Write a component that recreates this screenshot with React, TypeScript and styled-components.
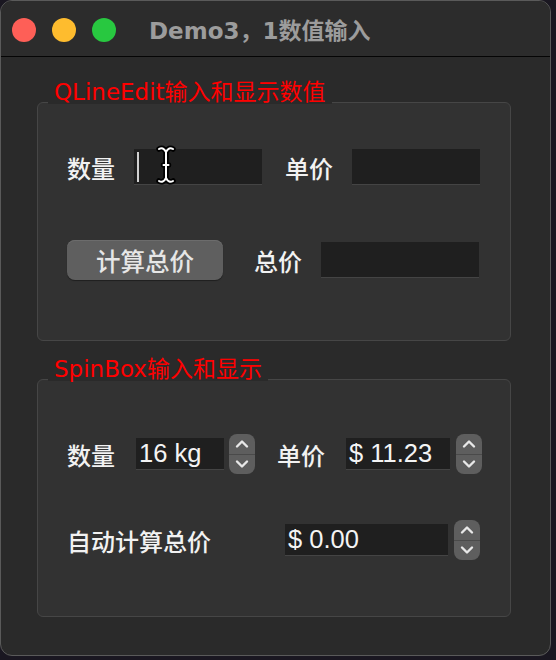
import React from "react"
import styled, { createGlobalStyle } from "styled-components"

const GlobalStyle = createGlobalStyle`
  html, body {
    margin: 0;
    padding: 0;
    background: #1a1721;
  }
  #root {
    width: 556px;
    height: 660px;
  }
`

const Window = styled.div`
  position: relative;
  width: 551px;
  height: 656px;
  box-sizing: border-box;
  border: 1px solid #5a5a5a;
  border-radius: 12px;
  background: #2a2a2a;
  overflow: hidden;
  display: flex;
  flex-direction: column;
`

const TitleBar = styled.div`
  height: 55px;
  flex: none;
  background: #2c2c2c;
  border-bottom: 1px solid #050505;
  display: flex;
  align-items: center;
  padding-left: 11px;
`

const Light = styled.span<{ $color: string }>`
  width: 24px;
  height: 24px;
  border-radius: 50%;
  background: ${(p) => p.$color};
  margin-right: 16px;
  margin-top: 2px;
`

const WindowTitle = styled.div`
  margin-left: 17px;
  margin-top: 1px;
  color: #9c9c9c;
  font-family: "DejaVu Sans", "Noto Sans CJK SC", sans-serif;
  font-weight: 700;
  font-size: 23px;
  white-space: nowrap;
`

const Content = styled.div`
  padding: 45px 0 0 36px;
  display: flex;
  flex-direction: column;
  gap: 38px;
`

const Group = styled.div<{ $height: number; $padTop: number; $gap: number }>`
  position: relative;
  width: 474px;
  height: ${(p) => p.$height}px;
  box-sizing: border-box;
  border: 1px solid #464646;
  border-radius: 6px;
  background: #323232;
  padding: ${(p) => p.$padTop}px 0 0 29px;
  display: flex;
  flex-direction: column;
  gap: ${(p) => p.$gap}px;
`

const GroupTitle = styled.div`
  position: absolute;
  left: 10px;
  top: -23px;
  height: 24px;
  padding: 0 6px;
  background: #2a2a2a;
  color: #ff0000;
  font-family: "DejaVu Sans", "Noto Sans CJK SC", sans-serif;
  font-size: 23px;
  line-height: 24px;
  white-space: nowrap;
  -webkit-font-smoothing: none;
`

const Row = styled.div<{ $height: number }>`
  height: ${(p) => p.$height}px;
  display: flex;
  align-items: center;
`

const Label = styled.span<{ $gap: number }>`
  color: #f2f2f2;
  font-family: "Noto Sans CJK SC", sans-serif;
  font-size: 24px;
  font-weight: 500;
  margin-right: ${(p) => p.$gap}px;
  white-space: nowrap;
`

const LineEdit = styled.div<{ $width: number; $height: number; $gap?: number }>`
  position: relative;
  width: ${(p) => p.$width}px;
  height: ${(p) => p.$height}px;
  box-sizing: border-box;
  background: #1f1f1f;
  border-bottom: 1px solid #444;
  margin-right: ${(p) => p.$gap ?? 0}px;
  display: flex;
  align-items: center;
  padding-left: 3px;
  color: #f4f4f4;
  font-family: "Liberation Sans", Arial, sans-serif;
  font-size: 25.5px;
`

const Caret = styled.span`
  width: 2px;
  height: 30px;
  background: #d0d0d0;
`

const PushButton = styled.button`
  width: 156px;
  height: 40px;
  border: none;
  border-radius: 8px;
  background: #5f5f5f;
  box-shadow: inset 0 1px 0 #6c6c6c, 0 1px 1px rgba(0, 0, 0, 0.4);
  color: #e6e6e6;
  font-family: "Noto Sans CJK SC", sans-serif;
  font-size: 24.5px;
  font-weight: 500;
  margin-right: 31px;
  padding: 0;
`

const SpinButtons = styled.div<{ $gap: number; $after?: number }>`
  width: 26px;
  height: 40px;
  border-radius: 8px;
  background: #5e5e5e;
  margin-left: ${(p) => p.$gap}px;
  margin-right: ${(p) => p.$after ?? 0}px;
  display: flex;
  flex-direction: column;
  overflow: hidden;
`

const SpinHalf = styled.div<{ $top?: boolean }>`
  flex: 1;
  display: flex;
  align-items: center;
  justify-content: center;
  border-bottom: ${(p) => (p.$top ? "1px solid #4a4a4a" : "none")};
`

const Cursor = styled.svg`
  position: absolute;
  left: 22px;
  top: -4px;
`

const Chevron = ({ up }: { up?: boolean }) => (
  <svg width="14" height="10" viewBox="0 0 14 10">
    <polyline
      points={up ? "2,7.5 7,2.5 12,7.5" : "2,2.5 7,7.5 12,2.5"}
      fill="none"
      stroke="#e8e8e8"
      strokeWidth="2.4"
      strokeLinecap="round"
      strokeLinejoin="round"
    />
  </svg>
)

const Spin = ({ gap, after }: { gap: number; after?: number }) => (
  <SpinButtons $gap={gap} $after={after}>
    <SpinHalf $top>
      <Chevron up />
    </SpinHalf>
    <SpinHalf>
      <Chevron />
    </SpinHalf>
  </SpinButtons>
)

const IBeam = () => {
  const d =
    "M3 4 C5.5 2.5 8 3 10 7 C12 3 14.5 2.5 17 4 M10 7 L10 33 M3 36 C5.5 37.5 8 37 10 33 C12 37 14.5 37.5 17 36 M7.5 20 L12.5 20"
  return (
    <Cursor width="20" height="40" viewBox="0 0 20 40">
      <path d={d} fill="none" stroke="#000" strokeWidth="5.5" strokeLinecap="round" strokeLinejoin="round" />
      <path d={d} fill="none" stroke="#fff" strokeWidth="2" strokeLinecap="round" strokeLinejoin="round" />
    </Cursor>
  )
}

const App: React.FC = () => {
  return (
    <>
      <GlobalStyle />
      <Window>
        <TitleBar>
          <Light $color="#fe5f57" />
          <Light $color="#febc2e" />
          <Light $color="#28c840" />
          <WindowTitle>Demo3，1数值输入</WindowTitle>
        </TitleBar>
        <Content>
          <Group $height={239} $padTop={46} $gap={55}>
            <GroupTitle>QLineEdit输入和显示数值</GroupTitle>
            <Row $height={36}>
              <Label $gap={19}>数量</Label>
              <LineEdit $width={128} $height={36} $gap={23}>
                <Caret />
                <IBeam />
              </LineEdit>
              <Label $gap={19}>单价</Label>
              <LineEdit $width={128} $height={36} />
            </Row>
            <Row $height={40}>
              <PushButton>计算总价</PushButton>
              <Label $gap={19}>总价</Label>
              <LineEdit $width={158} $height={36} />
            </Row>
          </Group>
          <Group $height={238} $padTop={54} $gap={46}>
            <GroupTitle>SpinBox输入和显示</GroupTitle>
            <Row $height={40}>
              <Label $gap={21}>数量</Label>
              <LineEdit $width={88} $height={32}>16 kg</LineEdit>
              <Spin gap={5} after={22} />
              <Label $gap={21}>单价</Label>
              <LineEdit $width={104} $height={32}>$ 11.23</LineEdit>
              <Spin gap={6} />
            </Row>
            <Row $height={40}>
              <Label $gap={74}>自动计算总价</Label>
              <LineEdit $width={163} $height={32}>$ 0.00</LineEdit>
              <Spin gap={6} />
            </Row>
          </Group>
        </Content>
      </Window>
    </>
  )
}

export default App
